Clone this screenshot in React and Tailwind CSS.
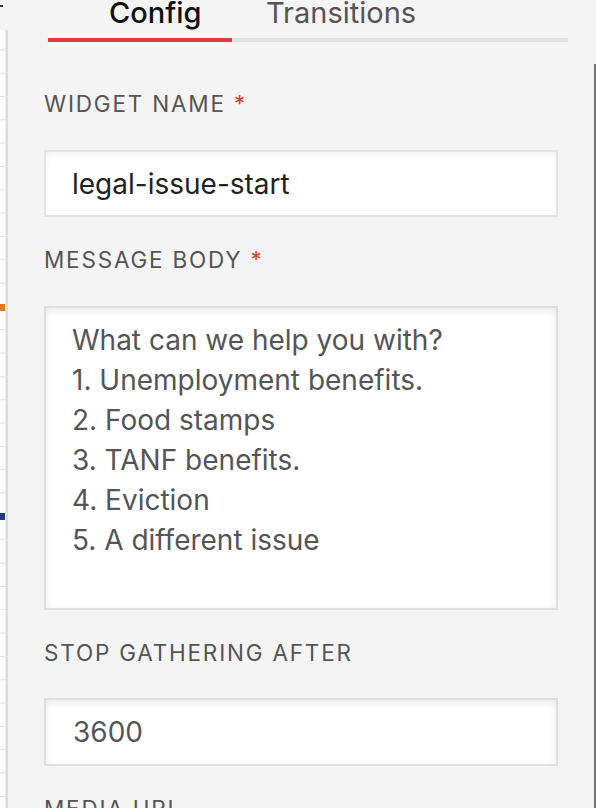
import React from "react";

const font = { fontFamily: "Inter, 'Noto Sans', sans-serif" };

function CanvasStrip() {
  const lines = [];
  for (let y = 49.3; y < 808; y += 23.33) lines.push(y);
  return (
    <div className="w-[8px] h-full flex flex-col shrink-0">
      <div className="h-[30px] shrink-0 relative bg-[#f4f4f4]">
        <div className="absolute left-0 top-[5px] w-[3px] h-[2px] bg-[#333]" />
      </div>
      <svg width="8" height="778" className="block shrink-0">
        <rect x="0" y="0" width="8" height="778" fill="#ffffff" />
        {lines.map((y, i) => (
          <rect key={i} x="0" y={y - 30} width="6" height="1" fill="#d6e2f3" />
        ))}
        <rect x="0" y={274} width="7" height="7" fill="#d97b22" />
        <rect x="0" y={483} width="7" height="7" fill="#1f3c85" />
        <rect x="6" y="0" width="2" height="778" fill="#dcdcdc" />
        <rect x="5" y="0" width="1" height="778" fill="#ececec" />
      </svg>
    </div>
  );
}

function Label({ children, className = "", required = false }) {
  return (
    <div className={"shrink-0 h-[22px] leading-[22px] text-[22.5px] tracking-[1.8px] text-[#555] " + className}>
      {children}
      {required && <span className="text-[#e8391f]"> *</span>}
    </div>
  );
}

export default function App() {
  return (
    <div className="w-[596px] h-[808px] overflow-hidden flex bg-[#f4f4f4]" style={font}>
      <CanvasStrip />
      <div className="flex-1 flex flex-col pl-[36px] pr-[36px] overflow-hidden">
        {/* tabs */}
        <div className="shrink-0 ml-[4px] mr-[-10px] h-[42px] flex flex-col justify-end">
          <div className="flex h-[38px] items-end">
            <div className="w-[184px] h-full flex items-start">
              <span className="ml-[61px] mt-[-5px] text-[29px] leading-[36px] font-medium text-[#111]">Config</span>
            </div>
            <div className="flex-1 h-full flex items-start">
              <span className="ml-[34px] mt-[-5px] text-[29px] leading-[36px] text-[#555]">Transitions</span>
            </div>
          </div>
          <div className="flex h-[4px]">
            <div className="w-[184px] bg-[#dc3d3f]" />
            <div className="flex-1 bg-[#e2e2e2]" />
          </div>
        </div>

        <Label className="mt-[51px]" required>WIDGET NAME</Label>
        <div className="shrink-0 mt-[35px] h-[67px] border-2 border-[#e3e3e3] bg-white shadow-[inset_0_3px_6px_rgba(0,0,0,0.05)] flex items-center px-[26px] text-[28px] text-[#222]">
          legal-issue-start
        </div>

        <Label className="mt-[32px]" required>MESSAGE BODY</Label>
        <div className="shrink-0 mt-[35px] h-[304px] border-2 border-[#dedede] bg-white shadow-[inset_0_3px_8px_rgba(0,0,0,0.08)] pt-[12px] px-[26px] text-[28px] leading-[40px] text-[#555]">
          <div>What can we help you with?</div>
          <div>1. Unemployment benefits.</div>
          <div>2. Food stamps</div>
          <div>3. TANF benefits.</div>
          <div>4. Eviction</div>
          <div>5. A different issue</div>
        </div>

        <Label className="mt-[32px]">STOP GATHERING AFTER</Label>
        <div className="shrink-0 mt-[34px] h-[68px] border-2 border-[#dedede] bg-white shadow-[inset_0_3px_8px_rgba(0,0,0,0.08)] flex items-center px-[27px] text-[28px] text-[#555]">
          3600
        </div>

        <Label className="mt-[32px]">MEDIA URL</Label>
      </div>
      <div className="w-[2px] h-full flex flex-col shrink-0">
        <div className="h-[64px] shrink-0" />
        <div className="flex-1 bg-[#777]" />
      </div>
    </div>
  );
}
